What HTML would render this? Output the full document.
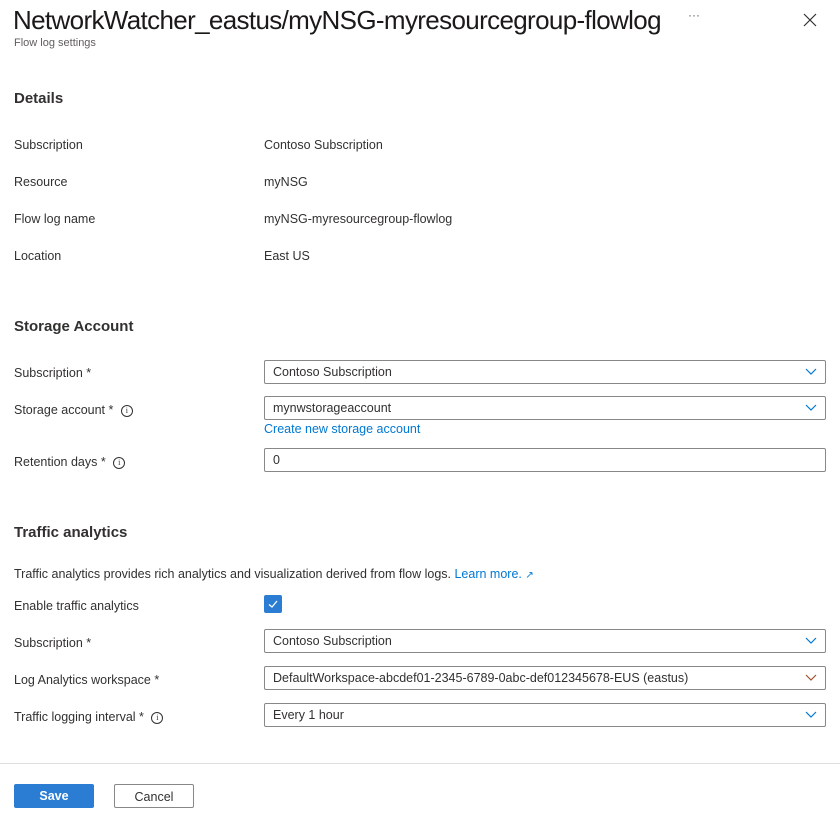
<!DOCTYPE html>
<html><head><meta charset="utf-8"><style>
body{margin:0;width:840px;height:823px;background:#fff;font-family:"Liberation Sans",sans-serif;color:#323130;position:relative;overflow:hidden}
.a{position:absolute;white-space:nowrap}
.t{font-size:12.5px;line-height:16px}
.h{font-size:15px;font-weight:bold;line-height:20px}
.in{position:absolute;left:264px;width:552px;height:22px;border:1px solid #8a8886;border-radius:2px;font-size:12.5px;line-height:22px;padding-left:8px;box-sizing:content-box}
.in svg{position:absolute;right:8px;top:7px}
.i{display:inline-block;width:10px;height:10px;border:1px solid #323130;border-radius:50%;font-size:8px;line-height:10px;text-align:center;vertical-align:middle;margin-left:4px;font-family:"Liberation Serif",serif}
</style></head><body>
<div class="a" style="left:13px;top:3px;font-size:26px;line-height:34px;color:#1b1a19;letter-spacing:-0.65px">NetworkWatcher_eastus/myNSG-myresourcegroup-flowlog</div>
<div class="a" style="left:688px;top:8px;font-size:12px;color:#605e5c">···</div>
<svg class="a" style="left:803px;top:13px" width="14" height="14"><path d="M1 1L13 13M13 1L1 13" stroke="#323130" stroke-width="1.2"/></svg>
<div class="a" style="left:14px;top:37px;font-size:11px;color:#605e5c">Flow log settings</div>

<div class="a h" style="left:14px;top:89px">Details</div>
<div class="a t" style="left:14px;top:137px">Subscription</div><div class="a t" style="left:264px;top:137px">Contoso Subscription</div>
<div class="a t" style="left:14px;top:174px">Resource</div><div class="a t" style="left:264px;top:174px">myNSG</div>
<div class="a t" style="left:14px;top:211px">Flow log name</div><div class="a t" style="left:264px;top:211px">myNSG-myresourcegroup-flowlog</div>
<div class="a t" style="left:14px;top:248px">Location</div><div class="a t" style="left:264px;top:248px">East US</div>

<div class="a h" style="left:14px;top:317px">Storage Account</div>
<div class="a t" style="left:14px;top:365px">Subscription *</div>
<div class="in" style="top:360px">Contoso Subscription<svg width="12" height="8"><path d="M1 1L6 6L11 1" stroke="#0078d4" fill="none" stroke-width="1.2"/></svg></div>
<div class="a t" style="left:14px;top:402px">Storage account * <span class="i">i</span></div>
<div class="in" style="top:396px">mynwstorageaccount<svg width="12" height="8"><path d="M1 1L6 6L11 1" stroke="#0078d4" fill="none" stroke-width="1.2"/></svg></div>
<div class="a t" style="left:264px;top:421px;color:#0078d4">Create new storage account</div>
<div class="a t" style="left:14px;top:454px">Retention days * <span class="i">i</span></div>
<div class="in" style="top:448px">0</div>

<div class="a h" style="left:14px;top:523px">Traffic analytics</div>
<div class="a t" style="left:14px;top:566px">Traffic analytics provides rich analytics and visualization derived from flow logs. <span style="color:#0078d4">Learn more. <span style="font-size:10px">↗</span></span></div>
<div class="a t" style="left:14px;top:598px">Enable traffic analytics</div>
<div class="a" style="left:264px;top:595px;width:18px;height:18px;background:#2b7cd3;border-radius:2px"><svg width="18" height="18"><path d="M5 9.5L8 12L13 6" stroke="#fff" fill="none" stroke-width="1.3"/></svg></div>
<div class="a t" style="left:14px;top:635px">Subscription *</div>
<div class="in" style="top:629px">Contoso Subscription<svg width="12" height="8"><path d="M1 1L6 6L11 1" stroke="#0078d4" fill="none" stroke-width="1.2"/></svg></div>
<div class="a t" style="left:14px;top:672px">Log Analytics workspace *</div>
<div class="in" style="top:666px">DefaultWorkspace-abcdef01-2345-6789-0abc-def012345678-EUS (eastus)<svg width="12" height="8"><path d="M1 1L6 6L11 1" stroke="#a0522d" fill="none" stroke-width="1.2"/></svg></div>
<div class="a t" style="left:14px;top:709px">Traffic logging interval * <span class="i">i</span></div>
<div class="in" style="top:703px">Every 1 hour<svg width="12" height="8"><path d="M1 1L6 6L11 1" stroke="#0078d4" fill="none" stroke-width="1.2"/></svg></div>

<div class="a" style="left:0;top:763px;width:840px;height:1px;background:#e1dfdd"></div>
<div class="a" style="left:14px;top:784px;width:80px;height:24px;background:#2b7cd3;border-radius:2px;color:#fff;font-size:12.5px;font-weight:bold;text-align:center;line-height:25px">Save</div>
<div class="a" style="left:114px;top:784px;width:78px;height:22px;border:1px solid #8a8886;border-radius:2px;font-size:12.5px;text-align:center;line-height:24px">Cancel</div>
</body></html>
